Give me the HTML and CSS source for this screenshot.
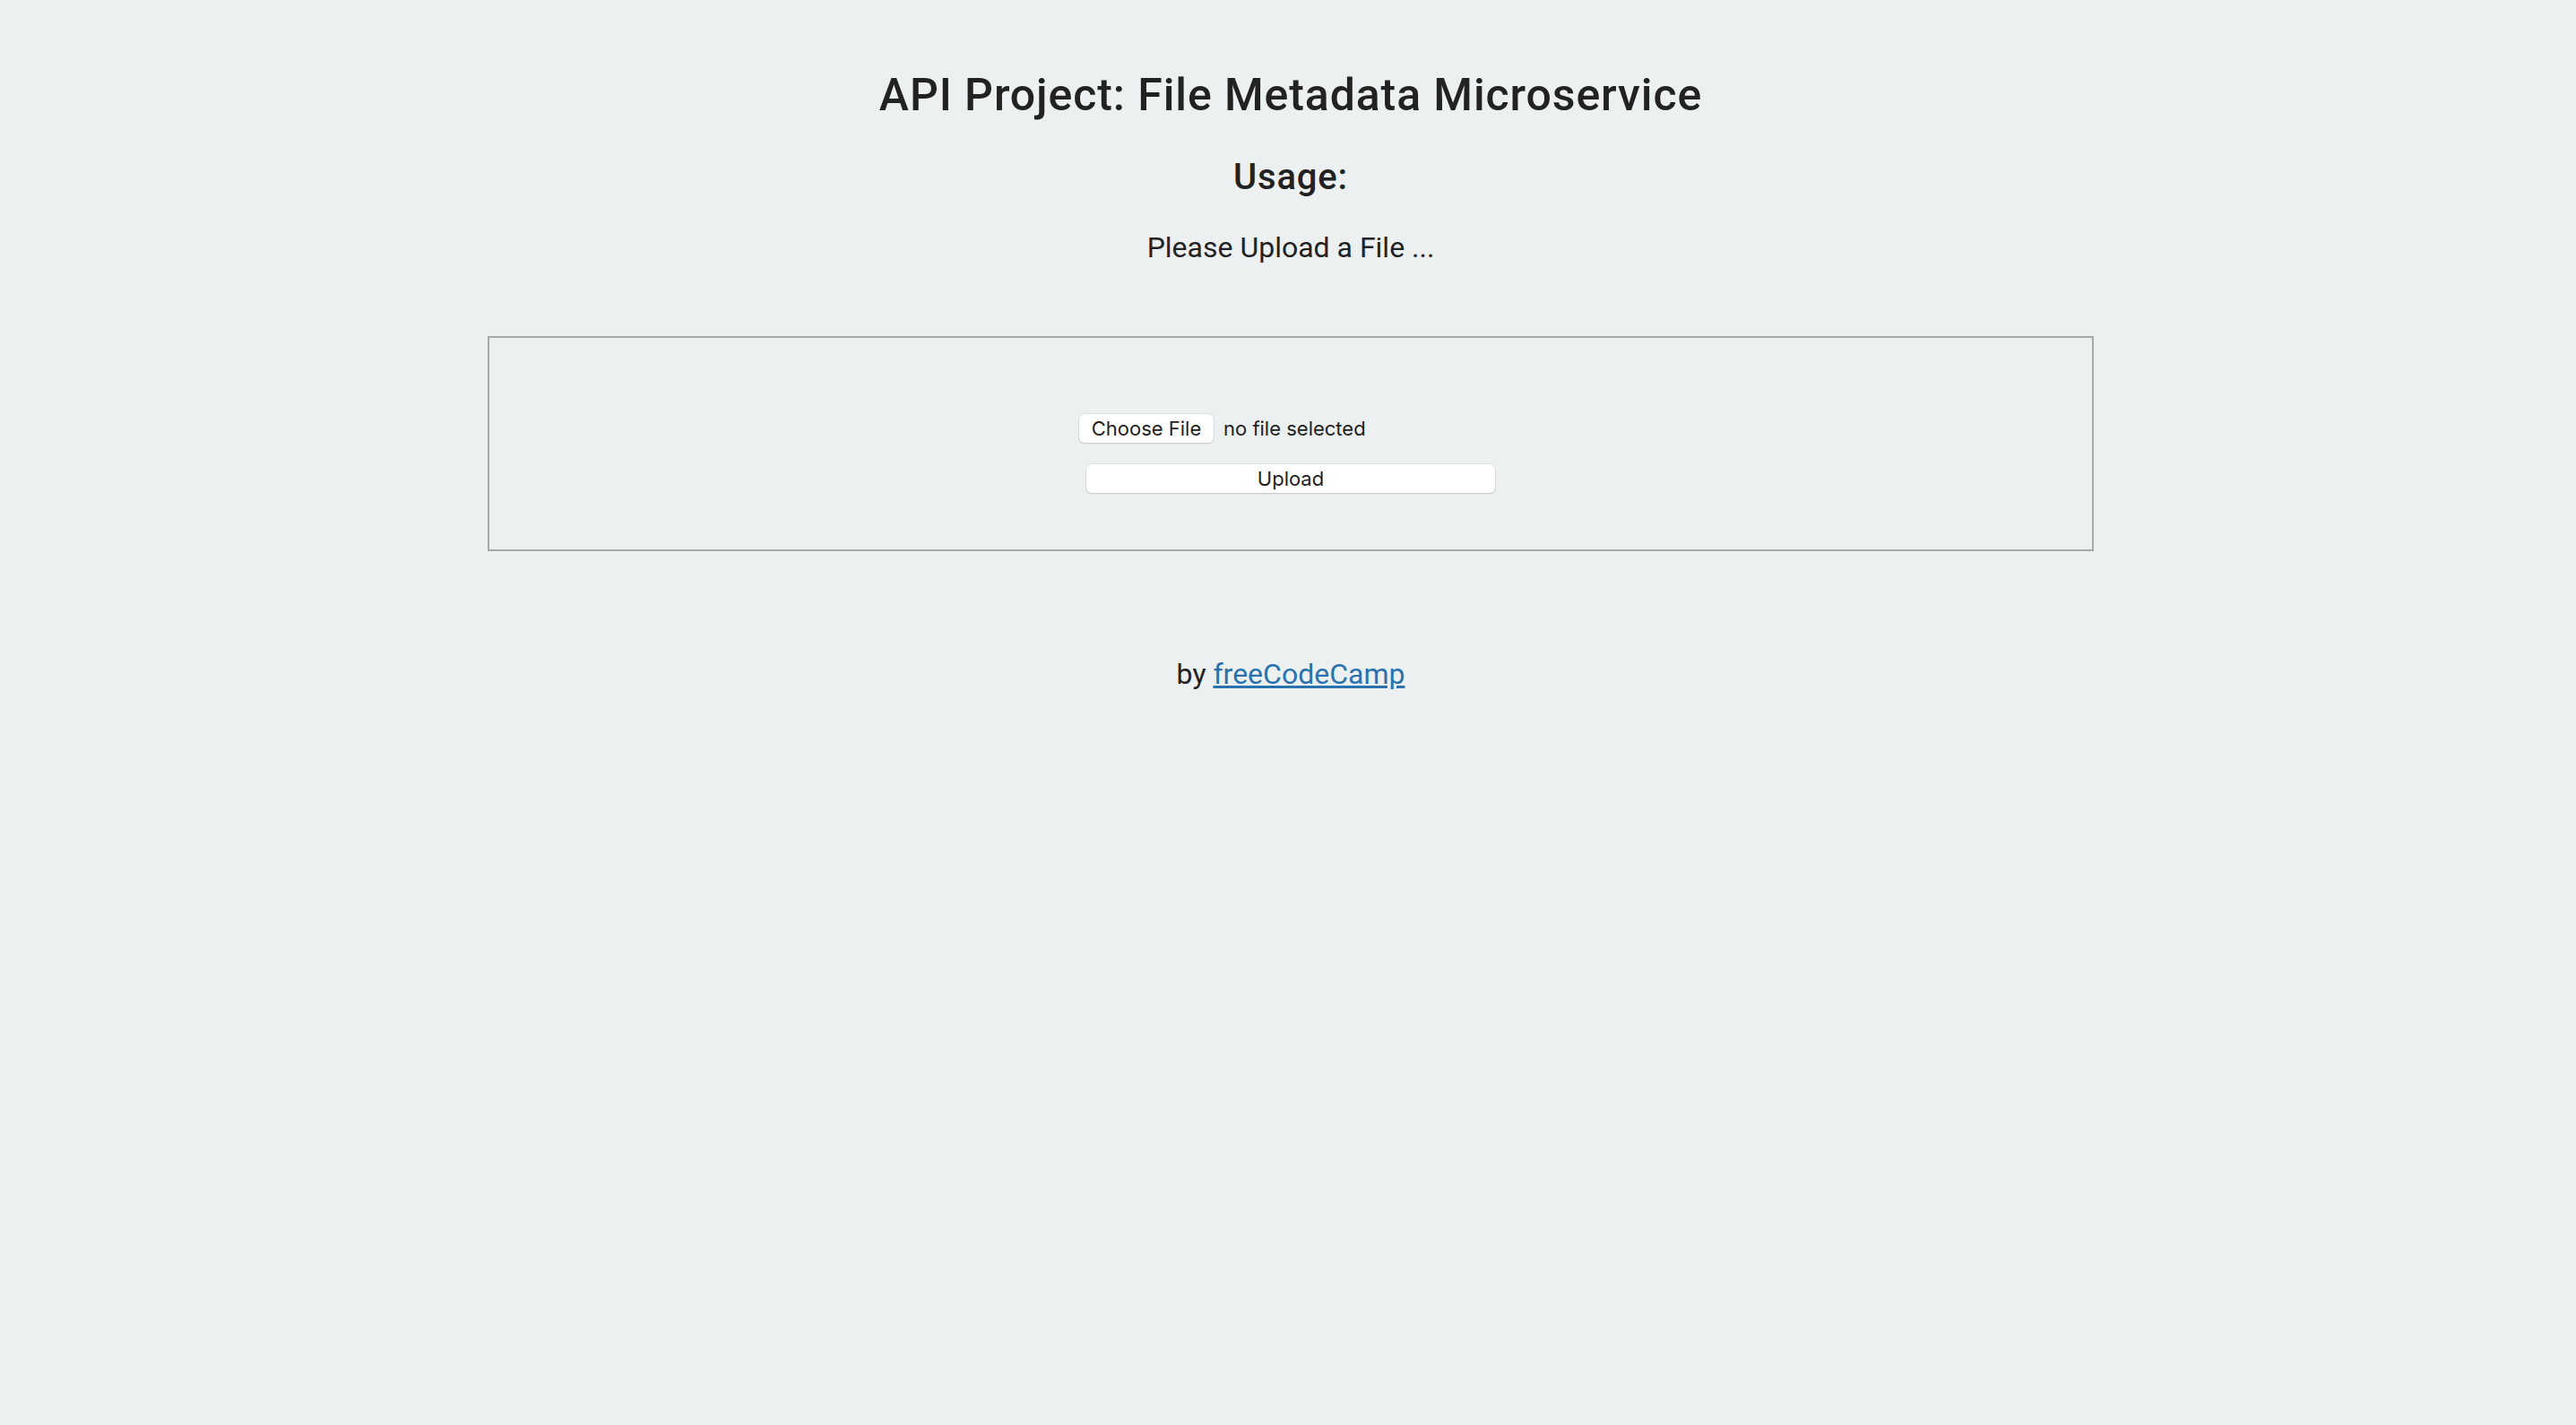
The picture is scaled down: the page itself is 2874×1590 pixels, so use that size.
FILE: index.html
```html
<!DOCTYPE html>
<html lang="en">
<head>
<meta charset="utf-8">
<title>File Metadata Microservice</title>
<link rel="stylesheet" href="styles.css">
</head>
<body>
  <div class="container">
    <h1 class="title">API Project: File Metadata Microservice</h1>
    <h2 class="subtitle">Usage:</h2>
    <p class="lead">Please Upload a File ...</p>
    <div class="upload-box">
      <form class="upload-form">
        <div class="file-field">
          <span class="btn choose-btn">Choose File</span>
          <span class="file-label">no file selected</span>
        </div>
        <span class="btn upload-btn">Upload</span>
      </form>
    </div>
    <p class="footer">by <a class="fcc-link" href="#">freeCodeCamp</a></p>
  </div>
</body>
</html>
```
FILE: styles.css
```css
html, body {
  margin: 0;
  padding: 0;
}
body {
  background: #ecf0f1;
  color: #222;
  font-family: Roboto, "Liberation Sans", sans-serif;
  text-align: center;
  min-height: 1590px;
}
.container {
  display: flex;
  flex-direction: column;
  align-items: center;
  padding-top: 76px;
  padding-left: 6px;
}
.title {
  margin: 0;
  font-size: 50px;
  line-height: 60px;
  font-weight: 500;
  letter-spacing: 0.018em;
}
.subtitle {
  margin: 38px 0 0;
  font-size: 40px;
  line-height: 48px;
  font-weight: 500;
  letter-spacing: 0.02em;
}
.lead {
  margin: 35px 0 0;
  font-size: 32px;
  line-height: 38px;
}
.upload-box {
  margin-top: 80px;
  width: 1788px;
  box-sizing: content-box;
  border: 2px solid #a6aaac;
  padding: 85px 0 63px;
}
.upload-form {
  display: flex;
  flex-direction: column;
  align-items: center;
  gap: 24px;
}
.file-field {
  width: 472px;
  display: flex;
  align-items: center;
  gap: 11px;
}
.btn {
  display: inline-flex;
  align-items: center;
  justify-content: center;
  box-sizing: border-box;
  height: 32px;
  background: #fff;
  border-radius: 6px;
  box-shadow: 0 0 0 1px rgba(0,0,0,0.06), 0 1px 2px rgba(0,0,0,0.12);
  font-family: Inter, "Liberation Sans", sans-serif;
  font-size: 22px;
  color: #222;
}
.choose-btn {
  width: 150px;
}
.file-label {
  font-family: Inter, "Liberation Sans", sans-serif;
  font-size: 22px;
  color: #222;
}
.upload-btn {
  width: 456px;
}
.footer {
  margin: 118px 0 0;
  font-size: 32px;
  line-height: 38px;
}
.fcc-link {
  color: #2a72ad;
}
```
